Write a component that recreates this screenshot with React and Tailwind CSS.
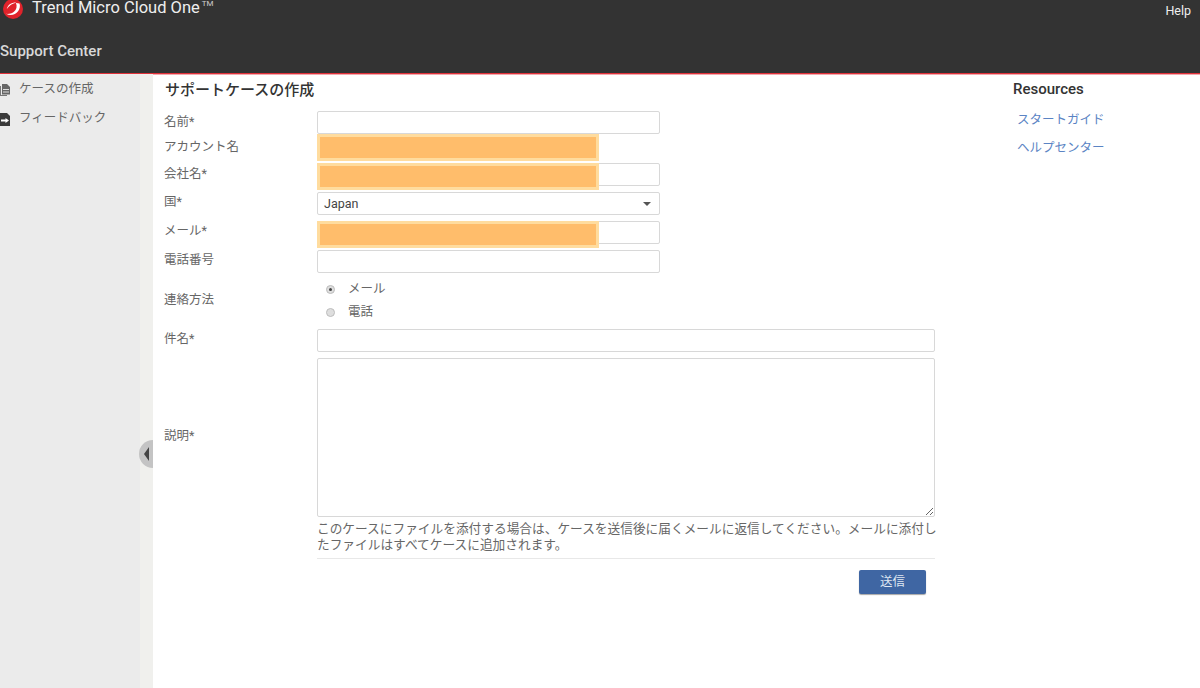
const font = { fontFamily: 'Roboto, "Noto Sans CJK JP", sans-serif' };

function Logo() {
	return (
		<svg width="20" height="20" viewBox="0 0 20 20" className="shrink-0">
			<circle cx="10" cy="10" r="10" fill="#e0232b" />
			<path d="M16.500 4.500c1.800 5.500-2.500 11.500-9 11.500-1.500 0-3-.4-4.300-1.200 5 .6 9.300-2 10.300-6.300.3-1.500.1-3-.6-4.500z" fill="#fff" />
			<path d="M3.800 10C4.500 6 8 3.300 13.500 3.400 9.500 4.300 6 6.500 3.800 10z" fill="#fff" />
		</svg>
	);
}

function CaseIcon() {
	return (
		<svg width="10" height="12" viewBox="0 0 10 12" className="mt-[2px] shrink-0">
			<path d="M0 2h1v9h6v1H0z" fill="#777" />
			<path d="M2 0h5l3 3v7.500H2z" fill="#666" />
			<path d="M3 5h6v1H3zM3 7.500h6v1H3z" fill="#ddd" />
		</svg>
	);
}

function FeedbackIcon() {
	return (
		<svg width="10" height="13" viewBox="0 0 10 13" className="mt-[2px] shrink-0">
			<path d="M0 0h7l3 3v10H0z" fill="#3a3a3a" />
			<path d="M1 6.500h4.500V5l3.500 2.500L5.500 10V8.500H1z" fill="#fff" />
		</svg>
	);
}

function Row({ label, h, pad = 'pb-[2px]', children }) {
	return (
		<div className={`flex items-center ${h}`}>
			<label className={`w-[153px] shrink-0 text-[12.500px] leading-none text-[#666] ${pad}`}>{label}</label>
			<div className="w-[343px]">{children}</div>
		</div>
	);
}

function TextBox() {
	return <input type="text" className="block h-[23px] w-full rounded-[2px] border border-[#d8d8d8] bg-white outline-none" />;
}

function Masked() {
	return <div className="absolute top-0 left-0 h-[27px] w-[282px] border-[3px] border-[#ffdc9e] bg-[#ffbd6b]" />;
}

function Radio({ checked, label }) {
	return (
		<div className="flex h-[23px] items-center">
			<span className="ml-[9px] flex h-[9px] w-[9px] items-center justify-center rounded-full border border-[#bdbdbd] bg-[#dedede]">
				{checked && <span className="h-[3px] w-[3px] rounded-full bg-[#444]" />}
			</span>
			<span className="ml-[13px] pb-[1px] text-[12.500px] leading-none text-[#666]">{label}</span>
		</div>
	);
}

export default function App() {
	return (
		<div className="flex h-[688px] w-[1200px] flex-col overflow-hidden bg-white" style={font}>
			<header className="h-[74px] shrink-0 border-b border-[#e0313a] bg-[#333333] shadow-[0_1px_0_#f2a9ad]">
				<div className="flex h-[20px] items-start">
					<div className="ml-[3px] -mt-px">
						<Logo />
					</div>
					<span className="ml-[9px] text-[16.500px] leading-[16px] text-[#eeeeee]">Trend Micro Cloud One</span>
					<span className="mt-[1px] ml-[2px] text-[8px] leading-[6px] text-[#cccccc]">TM</span>
					<span className="mt-[4px] mr-[9px] ml-auto text-[12.500px] leading-[14px] text-[#eeeeee]">Help</span>
				</div>
				<div className="mt-[22px] text-[15px] leading-[18px] font-medium text-[#d8d8d8]">Support Center</div>
			</header>

			<div className="flex min-h-0 flex-1">
				<aside className="relative flex w-[153px] shrink-0 border-r-[13px] border-[#f0f0ed] bg-[#ebebeb]">
					<nav className="flex flex-col gap-[15px] pt-[8px]">
						<a className="flex h-[14px] items-center text-[12.500px] leading-none text-[#666]">
							<CaseIcon />
							<span className="ml-[9px]">ケースの作成</span>
						</a>
						<a className="flex h-[14px] items-center text-[12.500px] leading-none text-[#666]">
							<FeedbackIcon />
							<span className="ml-[9px]">フィードバック</span>
						</a>
					</nav>
					<button className="absolute top-[366px] -right-[13px] flex h-[28px] w-[14px] items-center justify-center rounded-l-full bg-[#c4c4c4]">
						<span className="h-0 w-0 border-y-[7px] border-r-[5px] border-y-transparent border-r-[#444]" />
					</button>
				</aside>

				<main className="w-[860px] shrink-0 pt-[7px] pl-[11px]">
					<h1 className="ml-[1px] text-[15px] leading-[18px] font-medium text-[#333]">サポートケースの作成</h1>
					<form className="mt-[12px] w-[771px]">
						<Row label="名前*" h="h-[23px]" pad="pb-0">
							<TextBox />
						</Row>
						<Row label="アカウント名" h="h-[26px]" pad="pb-0">
							<div className="relative h-[26px]">
								<Masked />
							</div>
						</Row>
						<div className="mt-[3px]">
							<Row label="会社名*" h="h-[23px]" pad="pb-[1px]">
								<div className="relative">
									<TextBox />
									<Masked />
								</div>
							</Row>
						</div>
						<div className="mt-[6px]">
							<Row label="国*" h="h-[23px]">
								<div className="flex h-[23px] items-center rounded-[2px] border border-[#d8d8d8] bg-white pt-px pr-[8px] pl-[6px]">
									<span className="text-[12.500px] leading-none text-[#444]">Japan</span>
									<span className="ml-auto h-0 w-0 border-x-[4px] border-t-[4px] border-x-transparent border-t-[#555]" />
								</div>
							</Row>
						</div>
						<div className="mt-[6px]">
							<Row label="メール*" h="h-[23px]">
								<div className="relative">
									<TextBox />
									<Masked />
								</div>
							</Row>
						</div>
						<div className="mt-[6px]">
							<Row label="電話番号" h="h-[23px]">
								<TextBox />
							</Row>
						</div>
						<div className="mt-[5px]">
							<Row label="連絡方法" h="h-[46px]">
								<Radio checked label="メール" />
								<Radio label="電話" />
							</Row>
						</div>
						<div className="mt-[5px] flex h-[23px] items-center">
							<label className="w-[153px] shrink-0 pb-[2px] text-[12.500px] leading-none text-[#666]">件名*</label>
							<TextBox />
						</div>
						<div className="mt-[6px] flex h-[159px] items-center">
							<label className="w-[153px] shrink-0 pb-[2px] text-[12.500px] leading-none text-[#666]">説明*</label>
							<textarea className="block h-[159px] w-full rounded-[2px] border border-[#d8d8d8] bg-white outline-none" />
						</div>
						<div className="ml-[153px]">
							<p className="mt-[4px] w-[626px] text-[12.700px] leading-[16px] text-[#666]">
								このケースにファイルを添付する場合は、ケースを送信後に届くメールに返信してください。メールに添付したファイルはすべてケースに追加されます。
							</p>
							<div className="mt-[5px] flex justify-end border-t border-[#e8e8e8] pt-[11px] pr-[9px]">
								<button type="button" className="h-[24px] w-[67px] rounded-[2px] bg-[#3f66a3] text-[12.500px] leading-none text-[#dfe7f2] shadow-[0_1px_1px_rgba(0,0,0,0.35)]">
									送信
								</button>
							</div>
						</div>
					</form>
				</main>

				<aside className="pt-[6px]">
					<h2 className="text-[15px] leading-[18px] font-medium text-[#333]">Resources</h2>
					<ul className="mt-[14px] ml-[4px] flex flex-col gap-[12px] text-[12.500px] leading-[16px] text-[#5b84c4]">
						<li>スタートガイド</li>
						<li>ヘルプセンター</li>
					</ul>
				</aside>
			</div>
		</div>
	);
}
